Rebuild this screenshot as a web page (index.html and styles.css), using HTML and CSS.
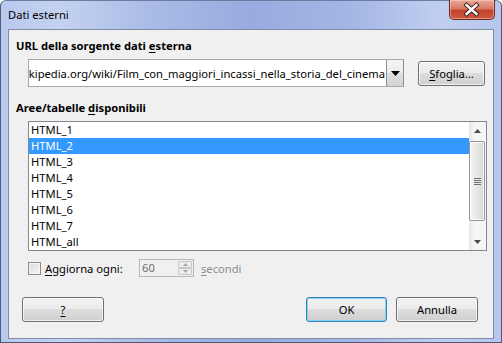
FILE: index.html
```html
<!DOCTYPE html>
<html lang="it">
<head>
    <meta charset="UTF-8">
    <title>Dati esterni</title>
    <link rel="stylesheet" href="styles.css">
</head>
<body>
    <div class="window">
        <div class="titlebar">
            <span class="title">Dati esterni</span>
            <div class="close-btn">
                <svg width="46" height="20" viewBox="0 0 46 20">
                    <path d="M18 5 L28 14 M28 5 L18 14" stroke="#3b1f1a" stroke-width="4.5" stroke-linecap="square" fill="none"/>
                    <path d="M18 5 L28 14 M28 5 L18 14" stroke="#ffffff" stroke-width="2.6" stroke-linecap="square" fill="none"/>
                </svg>
            </div>
        </div>

        <div class="client">
            <div class="section-label">URL della sorgente dati <u>e</u>sterna</div>
            <div class="url-row">
                <div class="combo">
                    <div class="combo-text"><span>kipedia.org/wiki/Film_con_maggiori_incassi_nella_storia_del_cinema</span></div>
                    <div class="combo-btn">
                        <svg width="9" height="5" viewBox="0 0 9 5"><path d="M0 0 H9 L4.5 5 Z" fill="#000"/></svg>
                    </div>
                </div>
                <button class="btn btn-browse"><u>S</u>foglia...</button>
            </div>

            <div class="section-label section-gap">Aree/tabelle <u>d</u>isponibili</div>
            <div class="listbox">
                <ul class="items">
                    <li>HTML_1</li>
                    <li class="selected">HTML_2</li>
                    <li>HTML_3</li>
                    <li>HTML_4</li>
                    <li>HTML_5</li>
                    <li>HTML_6</li>
                    <li>HTML_7</li>
                    <li>HTML_all</li>
                </ul>
                <div class="scrollbar">
                    <div class="sb-arrow">
                        <svg width="7" height="4" viewBox="0 0 7 4"><path d="M0 4 H7 L3.5 0 Z" fill="#4a4a4a"/></svg>
                    </div>
                    <div class="sb-track">
                        <div class="sb-thumb">
                            <div class="grip"></div>
                        </div>
                    </div>
                    <div class="sb-arrow">
                        <svg width="7" height="4" viewBox="0 0 7 4"><path d="M0 0 H7 L3.5 4 Z" fill="#4a4a4a"/></svg>
                    </div>
                </div>
            </div>

            <div class="refresh-row">
                <span class="checkbox"></span>
                <span class="refresh-label"><u>A</u>ggiorna ogni:</span>
                <div class="spin">
                    <span class="spin-value">60</span>
                    <div class="spin-btns">
                        <div class="spin-btn">
                            <svg width="5" height="3" viewBox="0 0 5 3"><path d="M0 3 H5 L2.5 0 Z" fill="#a8a8a8"/></svg>
                        </div>
                        <div class="spin-btn">
                            <svg width="5" height="3" viewBox="0 0 5 3"><path d="M0 0 H5 L2.5 3 Z" fill="#a8a8a8"/></svg>
                        </div>
                    </div>
                </div>
                <span class="unit"><u>s</u>econdi</span>
            </div>

            <div class="button-row">
                <button class="btn btn-help"><u>?</u></button>
                <div class="spacer"></div>
                <button class="btn btn-ok">OK</button>
                <button class="btn btn-cancel">Annulla</button>
            </div>
        </div>
    </div>
</body>
</html>
```

FILE: styles.css
```css
* {
    box-sizing: border-box;
}

body {
    margin: 0;
    width: 502px;
    height: 343px;
    overflow: hidden;
    font-family: "Noto Sans", "Open Sans", sans-serif;
    font-size: 11.2px;
    color: #000;
    background: #fff;
}

u {
    text-decoration: underline;
    text-underline-offset: 2px;
}

/* window frame */
.window {
    width: 502px;
    height: 343px;
    display: flex;
    flex-direction: column;
    padding: 0 7px 3px 7px;
    border: 1px solid #4a5a78;
    border-top-color: #6a7ca0;
    border-radius: 6px 6px 0 0;
    background: linear-gradient(90deg, #b9c9ee 0%, #c4d2f0 12%, #a9bbe6 30%, #97abe0 50%, #a4b6e4 70%, #c0cff0 88%, #b6c6ec 100%);
}

.titlebar {
    height: 28px;
    display: flex;
    align-items: flex-start;
    justify-content: space-between;
}

.title {
    margin-top: 6px;
    font-size: 11.2px;
    color: #000;
}

.close-btn {
    width: 46px;
    height: 20px;
    margin-top: -1px;
    margin-right: -1px;
    border: 1px solid #6b2b22;
    border-top: none;
    border-radius: 0 0 5px 5px;
    background: linear-gradient(180deg, #e9a999 0%, #d97966 45%, #c4412c 55%, #cb5a40 100%);
    box-shadow: inset 0 0 0 1px rgba(255, 220, 210, 0.45);
    display: flex;
}

.close-btn svg {
    margin-left: -1px;
}

/* client area */
.client {
    flex: 1;
    background: #f0f0f0;
    border: 1px solid #7f8da6;
    padding: 8px 0 0 0;
    display: flex;
    flex-direction: column;
}

.section-label {
    font-weight: bold;
    line-height: 16px;
    height: 16px;
    margin-left: 7px;
}

.section-gap {
    margin-top: 13px;
}

.url-row {
    display: flex;
    align-items: center;
    margin: 5px 0 0 19px;
    height: 28px;
}

.combo {
    width: 376px;
    height: 28px;
    display: flex;
    border: 1px solid #a3a8b0;
    border-right-color: #8e8f8f;
    background: #fff;
}

.combo-text {
    flex: 1;
    overflow: hidden;
    display: flex;
    justify-content: flex-end;
    align-items: center;
    white-space: nowrap;
    padding-right: 1px;
}

.combo-btn {
    width: 17px;
    border-left: 1px solid #8e8f8f;
    background: linear-gradient(180deg, #f4f4f4 0%, #ececec 50%, #dedede 51%, #d3d3d3 100%);
    display: flex;
    align-items: center;
    justify-content: center;
}

/* push buttons */
.btn {
    font-family: inherit;
    font-size: 11.2px;
    color: #000;
    height: 25px;
    padding: 0;
    border: 1px solid #707070;
    border-radius: 3px;
    background: linear-gradient(180deg, #f2f2f2 0%, #ebebeb 49%, #dddddd 50%, #cfcfcf 100%);
    box-shadow: inset 0 0 0 1px rgba(255, 255, 255, 0.7);
}

.btn-browse {
    width: 67px;
    margin-left: 14px;
}

/* list box */
.listbox {
    margin: 5px 0 0 19px;
    width: 459px;
    height: 130px;
    border: 1px solid #828790;
    background: #fff;
    display: flex;
}

.items {
    list-style: none;
    margin: 0;
    padding: 0;
    flex: 1;
}

.items li {
    height: 16px;
    line-height: 16px;
    padding-left: 2px;
}

.items li.selected {
    background: #3399ff;
    color: #fff;
}

.scrollbar {
    width: 17px;
    display: flex;
    flex-direction: column;
    background: linear-gradient(90deg, #e6e6e6 0%, #f5f5f5 30%, #f5f5f5 100%);
}

.sb-arrow {
    height: 17px;
    display: flex;
    align-items: center;
    justify-content: center;
}

.sb-track {
    flex: 1;
    padding: 2px 1px 0 0;
}

.sb-thumb {
    height: 80px;
    border: 1px solid #979797;
    border-radius: 2px;
    background: linear-gradient(90deg, #f3f3f3 0%, #e8e8e8 50%, #d6d6d6 100%);
    box-shadow: inset 0 0 0 1px rgba(255, 255, 255, 0.8);
    display: flex;
    align-items: center;
    justify-content: center;
}

.grip {
    width: 7px;
    height: 7px;
    background: repeating-linear-gradient(180deg, #6f6f6f 0, #6f6f6f 1px, #e8e8e8 1px, #e8e8e8 2px);
}

/* refresh interval row */
.refresh-row {
    display: flex;
    align-items: center;
    height: 18px;
    margin: 8px 0 0 19px;
}

.checkbox {
    width: 13px;
    height: 13px;
    border: 1px solid #8e8f8f;
    background: linear-gradient(135deg, #dcdcdc 0%, #f6f6f6 100%);
    box-shadow: inset 0 0 0 1px #f4f4f4;
}

.refresh-label {
    width: 98px;
    padding-left: 4px;
}

.spin {
    width: 55px;
    height: 18px;
    border: 1px solid #b5b8bd;
    background: #f0f0f0;
    display: flex;
}

.spin-value {
    flex: 1;
    color: #6d6d6d;
    line-height: 16px;
    padding-left: 2px;
}

.spin-btns {
    width: 16px;
    display: flex;
    flex-direction: column;
    padding: 1px;
}

.spin-btn {
    flex: 1;
    border: 1px solid #c8c8c8;
    border-radius: 1px;
    background: #ececec;
    display: flex;
    align-items: center;
    justify-content: center;
}

.unit {
    margin-left: 7px;
    color: #8d8d8d;
}

/* dialog buttons */
.button-row {
    display: flex;
    margin: 20px 15px 0 13px;
}

.spacer {
    flex: 1;
}

.btn-help {
    width: 82px;
}

.btn-ok {
    width: 81px;
    border-color: #3c7fb1;
    box-shadow: inset 0 0 0 1px #7ed3f6;
}

.btn-cancel {
    width: 82px;
    margin-left: 9px;
}
```
